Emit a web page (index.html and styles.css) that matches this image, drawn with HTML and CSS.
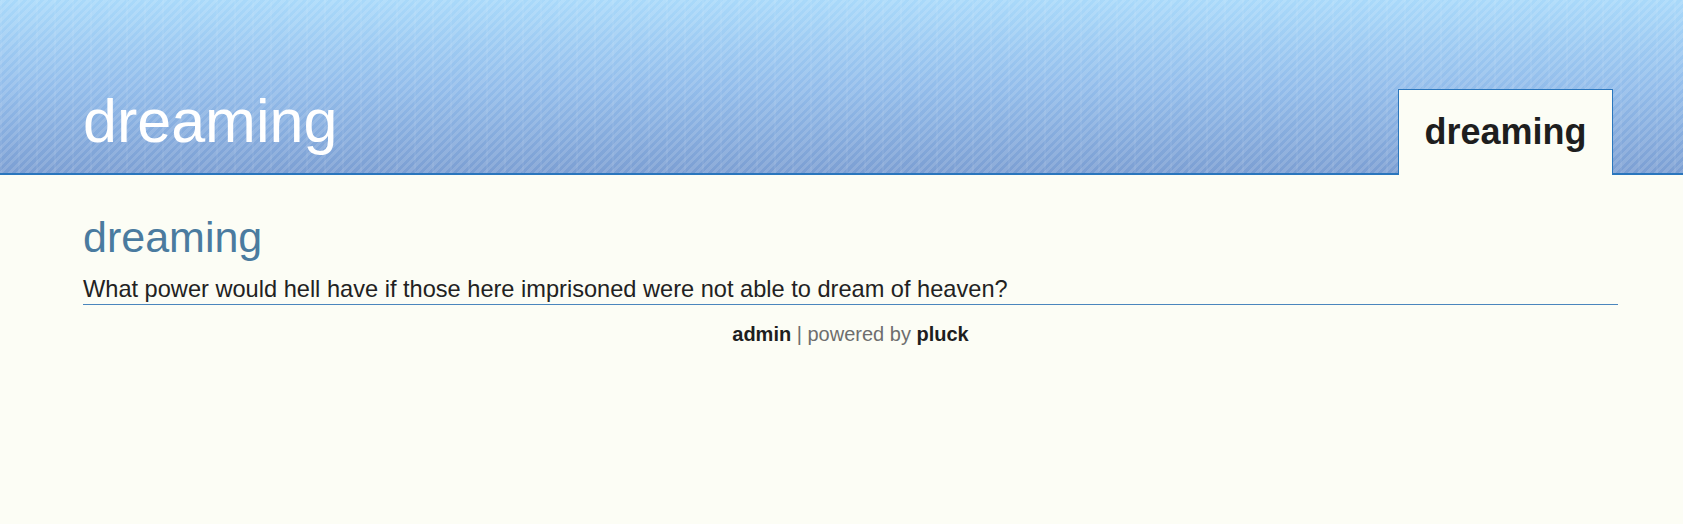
FILE: index.html
```html
<!DOCTYPE html>
<html>
<head>
<meta charset="utf-8">
<title>dreaming</title>
<link rel="stylesheet" href="styles.css">
</head>
<body>
<header class="header">
  <div class="header-inner">
    <div class="site-title">dreaming</div>
    <nav class="nav"><a class="nav-item" href="#">dreaming</a></nav>
  </div>
</header>
<main class="content">
  <h2 class="page-title">dreaming</h2>
  <div class="page-text">What power would hell have if those here imprisoned were not able to dream of heaven?</div>
  <div class="footer"><a class="footer-link" href="#">admin</a> | powered by <a class="footer-link" href="#">pluck</a></div>
</main>
</body>
</html>
```
FILE: styles.css
```css
html, body {
  margin: 0;
  padding: 0;
}
body {
  background: #fcfdf5;
  font-family: "Liberation Sans", Arial, sans-serif;
  color: #222;
}
.header {
  height: 173px;
  border-bottom: 2px solid #2a76bd;
  background:
    repeating-linear-gradient(90deg, rgba(255,255,255,0.06) 0 2px, rgba(255,255,255,0) 2px 18px),
    repeating-linear-gradient(-45deg, rgba(255,255,255,0.13) 0 3px, rgba(255,255,255,0) 3px 6px),
    linear-gradient(to bottom, #a9d9fa 0%, #93bdeb 50%, #7c9fd3 100%);
}
.header-inner {
  margin-left: 83px;
  width: 1530px;
  height: 100%;
  display: flex;
  justify-content: space-between;
  align-items: flex-end;
}
.site-title {
  color: #fff;
  font-size: 61px;
  line-height: 1;
  padding-bottom: 21px;
}
.nav {
  display: flex;
  margin-bottom: -2px;
}
.nav-item {
  display: block;
  box-sizing: border-box;
  width: 215px;
  height: 86px;
  padding-top: 20px;
  text-align: center;
  background: #fcfdf5;
  border: 1px solid #2a76bd;
  border-bottom: none;
  color: #1e1e1e;
  font-weight: bold;
  font-size: 36px;
  line-height: 1.2;
  text-decoration: none;
}
.content {
  margin-left: 83px;
  width: 1535px;
}
.page-title {
  margin: 0;
  padding-top: 37px;
  font-weight: normal;
  font-size: 43px;
  line-height: 50px;
  color: #4a7b9f;
}
.page-text {
  font-size: 23.6px;
  line-height: 30px;
  margin-top: 12px;
  border-bottom: 1px solid #4a86bd;
}
.footer {
  text-align: center;
  font-size: 20px;
  line-height: 24px;
  padding-top: 17px;
  color: #6e6e6e;
}
.footer-link {
  color: #1e1e1e;
  font-weight: bold;
  text-decoration: none;
}
```
